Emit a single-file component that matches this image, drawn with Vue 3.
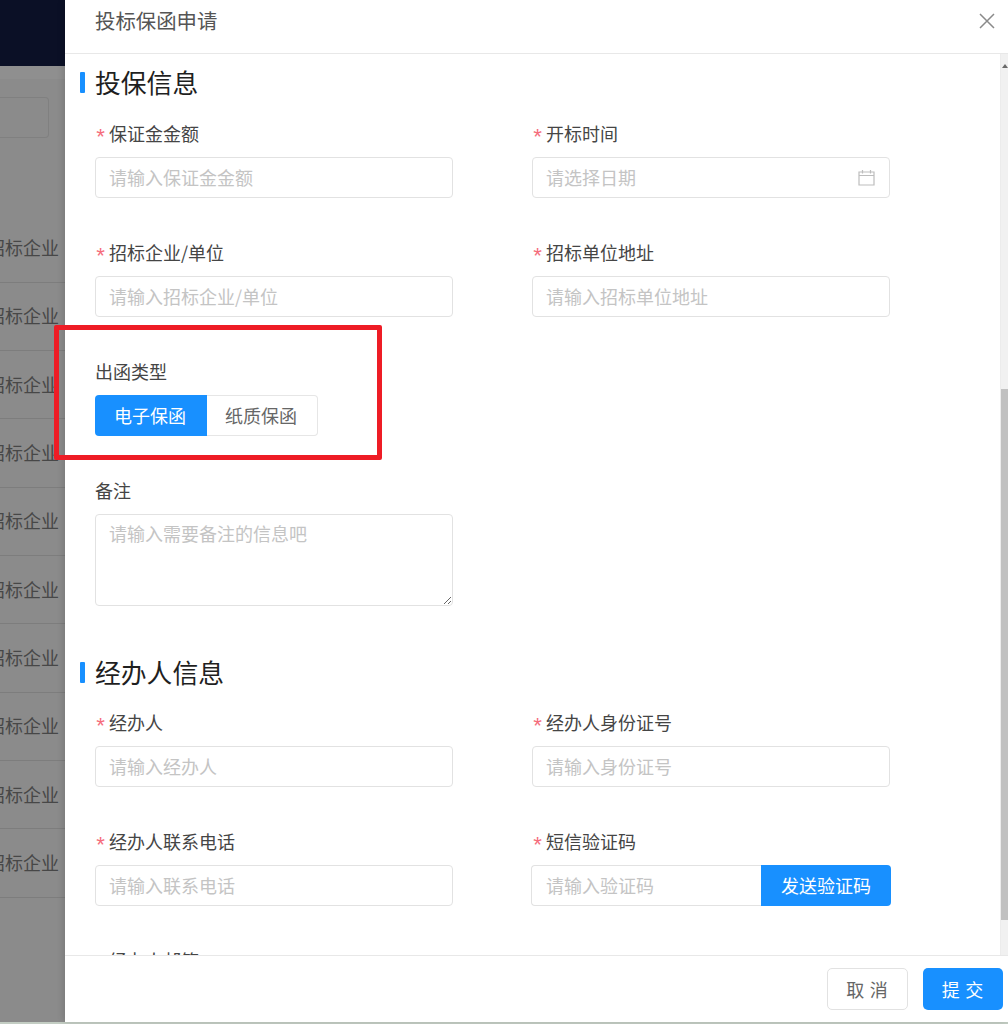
<script setup>
const rows = Array.from({ length: 10 }, (_, i) => i)
</script>

<template>
  <div class="page">
    <div class="stage">
      <aside class="backdrop">
        <div class="topbar"></div>
        <div class="band"></div>
        <div class="search"></div>
        <div class="table">
          <div v-for="r in rows" :key="r" class="row">招标企业</div>
        </div>
      </aside>

      <section class="drawer">
        <header class="head">
          <span class="head-title">投标保函申请</span>
          <svg class="close" width="16" height="16" viewBox="0 0 16 16" fill="none">
            <path d="M1 1 15 15M15 1 1 15" stroke="#8a8a8a" stroke-width="1.5" />
          </svg>
        </header>

        <div class="body">
          <form class="content">
            <h2 class="sec"><i class="bar"></i>投保信息</h2>
            <div class="grid">
              <div class="item">
                <label><b>*</b>保证金金额</label>
                <input placeholder="请输入保证金金额" />
              </div>
              <div class="item">
                <label><b>*</b>开标时间</label>
                <div class="date">
                  <input placeholder="请选择日期" />
                  <svg class="cal" width="17" height="17" viewBox="0 0 17 17" fill="none" stroke="#bdbdbd" stroke-width="1.2">
                    <path d="M1 3h15v13H1zM1 6.5h15M4.5 1v3.5M12.5 1v3.5" />
                  </svg>
                </div>
              </div>
              <div class="item">
                <label><b>*</b>招标企业/单位</label>
                <input placeholder="请输入招标企业/单位" />
              </div>
              <div class="item">
                <label><b>*</b>招标单位地址</label>
                <input placeholder="请输入招标单位地址" />
              </div>
              <div class="item first">
                <label>出函类型</label>
                <div class="radio">
                  <span class="opt on">电子保函</span>
                  <span class="opt">纸质保函</span>
                </div>
              </div>
              <div class="item first">
                <label>备注</label>
                <textarea placeholder="请输入需要备注的信息吧"></textarea>
              </div>
            </div>

            <h2 class="sec second"><i class="bar"></i>经办人信息</h2>
            <div class="grid">
              <div class="item">
                <label><b>*</b>经办人</label>
                <input placeholder="请输入经办人" />
              </div>
              <div class="item">
                <label><b>*</b>经办人身份证号</label>
                <input placeholder="请输入身份证号" />
              </div>
              <div class="item">
                <label><b>*</b>经办人联系电话</label>
                <input placeholder="请输入联系电话" />
              </div>
              <div class="item">
                <label><b>*</b>短信验证码</label>
                <div class="sms">
                  <input placeholder="请输入验证码" />
                  <button type="button">发送验证码</button>
                </div>
              </div>
              <div class="item">
                <label><b class="ghost">*</b>经办人邮箱</label>
                <input placeholder="请输入邮箱" />
              </div>
            </div>
          </form>
          <div class="scrollbar">
            <svg class="arrow" width="6" height="4" viewBox="0 0 6 4"><path d="M3 0 6 4H0z" fill="#6a6a6a" /></svg>
            <div class="thumb"></div>
          </div>
        </div>

        <footer class="foot">
          <button type="button" class="btn">取 消</button>
          <button type="button" class="btn primary">提 交</button>
        </footer>
      </section>

      <div class="mark"></div>
    </div>
    <div class="strip"></div>
  </div>
</template>

<style scoped>
.page {
  width: 1008px;
  height: 1024px;
  display: flex;
  flex-direction: column;
  overflow: hidden;
  font-family: "Noto Sans CJK SC", "Noto Sans", sans-serif;
}
.stage {
  position: relative;
  flex: 1;
  min-height: 0;
  display: flex;
}
.strip {
  height: 2px;
  background: #c3cdc3;
}
.backdrop {
  width: 65px;
  flex: none;
  background: #8b8b8b;
  overflow: hidden;
}
.topbar {
  height: 66px;
  background: #0b1026;
}
.band {
  height: 13px;
  background: #8f8f8f;
}
.search {
  width: 49px;
  height: 41px;
  margin-top: 18px;
  box-sizing: border-box;
  border: 1px solid #808080;
  border-left: 0;
  border-radius: 0 4px 4px 0;
}
.table {
  margin-top: 76.4px;
}
.row {
  box-sizing: border-box;
  height: 68.35px;
  display: flex;
  align-items: center;
  justify-content: flex-end;
  padding: 0 6px 2px 0;
  white-space: nowrap;
  font-size: 18px;
  color: #474747;
  border-bottom: 1px solid #7d7d7d;
}
.drawer {
  flex: 1;
  min-width: 0;
  display: flex;
  flex-direction: column;
  background: #fff;
  box-shadow: -2px 0 6px rgba(0, 0, 0, 0.12);
}
.head {
  flex: none;
  height: 53px;
  border-bottom: 1px solid #e8e8e8;
  display: flex;
  justify-content: space-between;
  align-items: flex-start;
  padding: 0 13px 0 30px;
}
.head-title {
  font-size: 20.4px;
  line-height: 40px;
  color: #555;
}
.close {
  margin-top: 13px;
}
.body {
  flex: 1;
  min-height: 0;
  display: flex;
}
.content {
  flex: 1;
  min-width: 0;
  overflow: hidden;
  padding: 11px 0 0 15px;
}
.sec {
  box-sizing: border-box;
  margin: 0 0 21px;
  padding-bottom: 4px;
  display: flex;
  align-items: center;
  gap: 10px;
  height: 36px;
  font-size: 25.8px;
  font-weight: 400;
  color: #1f1f1f;
}
.sec.second {
  margin: 6px 0 20px;
}
.bar {
  align-self: flex-start;
  margin-top: 7px;
  width: 5px;
  height: 21px;
  background: #1890ff;
  border-radius: 1px;
}
.grid {
  display: grid;
  grid-template-columns: 358px 358px;
  column-gap: 79px;
  padding-left: 15px;
}
.item {
  padding-bottom: 43px;
}
.first {
  grid-column: 1;
}
label {
  display: block;
  height: 24px;
  margin-bottom: 11px;
  font-size: 18px;
  line-height: 22px;
  color: #454545;
  white-space: nowrap;
}
label b {
  display: inline-block;
  width: 14px;
  margin-left: -1px;
  margin-right: 1px;
  font-family: "Liberation Mono", monospace;
  font-weight: 400;
  font-size: 22px;
  line-height: 0;
  vertical-align: -4px;
  color: #f56c7c;
}
label b.ghost {
  visibility: hidden;
}
input,
textarea {
  display: block;
  box-sizing: border-box;
  width: 100%;
  height: 41px;
  padding: 0 13px 2px;
  border: 1px solid #e2e2e2;
  border-radius: 4px;
  outline: none;
  background: #fff;
  font-family: inherit;
  font-size: 18px;
  color: #444;
}
textarea {
  height: 92px;
  padding: 5px 14px 6px 14px;
  text-indent: -1px;
  line-height: 26px;
}
input::placeholder,
textarea::placeholder {
  color: #c4c4c4;
  opacity: 1;
}
.date {
  position: relative;
}
.cal {
  position: absolute;
  right: 15px;
  top: 12px;
}
.radio {
  display: flex;
  width: 223px;
  height: 41px;
}
.opt {
  box-sizing: border-box;
  width: 111px;
  flex: 1 1 auto;
  display: flex;
  align-items: center;
  justify-content: center;
  padding: 0 2px 2px 0;
  font-size: 18px;
  color: #666;
  border: 1px solid #e6e6e6;
  border-left: 0;
  border-radius: 0 4px 4px 0;
}
.opt.on {
  flex: none;
  width: 112px;
  color: #fff;
  background: #1890ff;
  border: 0;
  border-radius: 4px 0 0 4px;
}
.sms {
  display: flex;
  width: 360px;
  margin-left: -1px;
}
.sms input {
  flex: 1;
  min-width: 0;
  padding-left: 14px;
  border-right: 0;
  border-radius: 4px 0 0 4px;
}
.sms button {
  flex: none;
  width: 130px;
  height: 41px;
  border: 0;
  padding: 0 0 2px;
  border-radius: 0 4px 4px 0;
  background: #1890ff;
  color: #fff;
  font-family: inherit;
  font-size: 18px;
}
.scrollbar {
  flex: none;
  width: 8px;
  background: #f1f1f1;
  border-left: 1px solid #ececec;
  box-sizing: border-box;
  overflow: hidden;
}
.arrow {
  display: block;
  margin: 10px 0 0 1px;
}
.thumb {
  height: 531px;
  margin-top: 321px;
  background: #c1c1c1;
}
.foot {
  flex: none;
  height: 67px;
  box-sizing: border-box;
  border-top: 1px solid #e8e8e8;
  display: flex;
  justify-content: flex-end;
  gap: 15px;
  padding: 12px 5px 0 0;
}
.btn {
  width: 81px;
  height: 42px;
  padding: 0 1px 0 0;
  box-sizing: border-box;
  border: 1px solid #e2e2e2;
  border-radius: 5px;
  background: #fff;
  color: #666;
  font-family: inherit;
  font-size: 18px;
  word-spacing: 1.5px;
}
.btn.primary {
  width: 80px;
  border: 0;
  background: #1890ff;
  color: #fff;
}
.mark {
  position: absolute;
  left: 54px;
  top: 325px;
  width: 328px;
  height: 135px;
  box-sizing: border-box;
  border: 5px solid #ee1c25;
  border-radius: 2px;
  pointer-events: none;
}
</style>
